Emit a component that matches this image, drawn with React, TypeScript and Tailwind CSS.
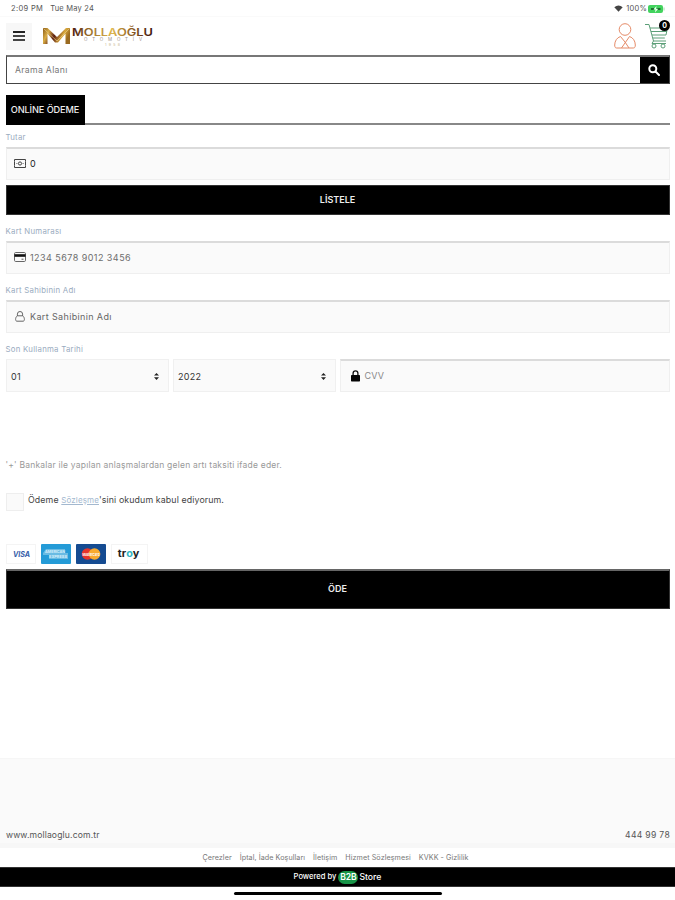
import React from "react";

function MoneyIcon() {
  return (
    <svg className="h-[9px] w-[12px] shrink-0" viewBox="0 0 12 9" fill="none" stroke="#444" strokeWidth="1">
      <path d="M.5 2.500V.5h11v2M.5 6.500v2h11v-2M.5 2.500v4M11.500 2.500v4" />
      <circle cx="6" cy="4.500" r="1.600" />
      <path d="M2.500 4.500h.8M8.700 4.500h.8" />
    </svg>
  );
}

function CardIcon() {
  return (
    <svg className="h-[10px] w-[12px] shrink-0" viewBox="0 0 12 10" fill="none">
      <rect x=".5" y=".5" width="11" height="9" rx="1.200" stroke="#666" />
      <path d="M.5 2.200h11v2.600H.5z" fill="#111" />
      <path d="M7.500 7.200h2" stroke="#555" />
    </svg>
  );
}

function PersonIcon() {
  return (
    <svg className="h-[11px] w-[10px] shrink-0" viewBox="0 0 10 11" fill="none" stroke="#666" strokeWidth="1">
      <path d="M2.400 5V3.100a2.600 2.600 0 0 1 5.200 0V5" />
      <path d="M2.400 4.800h5.200C8.900 5.600 9.400 7 9.400 8.500c0 1-.5 1.700-1.400 1.700H2C1.100 10.200.6 9.500.6 8.500.6 7 1.100 5.600 2.400 4.800z" />
    </svg>
  );
}

function LockIcon() {
  return (
    <svg className="h-[12px] w-[9px] shrink-0" viewBox="0 0 9 12">
      <path d="M2.100 5.500V3.300a2.400 2.400 0 0 1 4.800 0v2.200" fill="none" stroke="#111" strokeWidth="1.300" />
      <rect x="0" y="5" width="9" height="6.500" rx=".7" fill="#050505" />
    </svg>
  );
}

function Logo() {
  return (
    <svg className="ml-[11px] h-[22px] w-[111px]" viewBox="0 0 111 22">
      <defs>
        <linearGradient id="mark" x1="0" x2="1" y1="0" y2="0.300">
          <stop offset="0" stopColor="#8a5a18" />
          <stop offset=".25" stopColor="#d9ad45" />
          <stop offset=".52" stopColor="#5a1d10" />
          <stop offset=".8" stopColor="#d9a83c" />
          <stop offset="1" stopColor="#9a6a20" />
        </linearGradient>
        <linearGradient id="word" x1="0" x2="1" y1="0" y2="0">
          <stop offset="0" stopColor="#4a1a12" />
          <stop offset=".22" stopColor="#9a702c" />
          <stop offset=".5" stopColor="#dfb750" />
          <stop offset=".7" stopColor="#9a6928" />
          <stop offset="1" stopColor="#3c120e" />
        </linearGradient>
      </defs>
      <path d="M0 3h4.500l9.500 9 9-9H27v16h-4.500V8.500l-7.500 9h-3L4.500 8.500V19H0z" fill="url(#mark)" />
      <path d="M.5 3.500 14 16 26.500 3.500" fill="none" stroke="#f2d995" strokeWidth=".6" />
      <text x="29" y="10.500" textLength="81" lengthAdjust="spacingAndGlyphs" fontFamily="Inter, sans-serif" fontSize="10" fontWeight="600" fill="url(#word)">MOLLAOĞLU</text>
      <text x="41" y="16" textLength="58" fontFamily="Inter, sans-serif" fontSize="4.500" fill="#9b9187">OTOMOTİV</text>
      <text x="62" y="20.500" textLength="15" fontFamily="Inter, sans-serif" fontSize="3.500" fill="#c5b289">1958</text>
    </svg>
  );
}

function UserIcon() {
  return (
    <svg className="h-[26px] w-[22px]" viewBox="0 0 22 26" fill="none" stroke="#e58a67" strokeWidth="1">
      <circle cx="11" cy="6.500" r="5.800" />
      <path d="M6.500 13.500C3 14.500.7 18 .7 22c0 2 .5 3 2 3h16.600c1.500 0 2-1 2-3 0-4-2.300-7.500-5.800-8.500L7.500 25M6.500 13.500 11 19l4 6" />
    </svg>
  );
}

function CartIcon() {
  return (
    <svg className="h-[26px] w-[23px]" viewBox="0 0 23 26" fill="none" stroke="#5c9f78" strokeWidth="1">
      <path d="M0 1.500h4l4.500 16.500H21M5 5h16M6 8.500h16M7 12h14l1-5M7.800 15h12M8.500 18 7 20.500h14" />
      <circle cx="9" cy="23" r="2" />
      <circle cx="18" cy="23" r="2" />
    </svg>
  );
}

function StatusBar() {
  return (
    <div className="flex h-[17px] items-center border-b border-[#fafafa] pt-[1px] pr-[10px] pl-[11px] text-[7.500px] text-[#555]">
      <span className="tracking-[0.35px]">2:09 PM</span>
      <span className="ml-[7px] tracking-[0.2px]">Tue May 24</span>
      <svg className="ml-auto h-[7px] w-[9px]" viewBox="0 0 9 7">
        <path d="M.3 2.200Q4.500-1.200 8.700 2.200L4.500 6.800z" fill="#444" />
      </svg>
      <span className="ml-[3px] tracking-[0.2px]">100%</span>
      <svg className="ml-[1px] h-[8px] w-[17px]" viewBox="0 0 17 8">
        <rect width="15" height="8" rx="2" fill="#42d35e" />
        <path d="M16 2.500v3" stroke="#9bdfa8" />
        <path d="M3 4h3M9.500 4h3" stroke="#174d24" strokeWidth="1.500" />
        <path d="m8.500 1-3 3.500h2l-.5 3L10 4H8z" fill="#effff2" />
      </svg>
    </div>
  );
}

function Label({ children }: { children: React.ReactNode }) {
  return <div className="flex h-[20px] items-center pt-[1px] text-[7.800px] tracking-[0.27px] whitespace-nowrap text-[#9aabc0]">{children}</div>;
}

function Field({ label, icon, text, textStyle }: { label: string; icon: React.ReactNode; text: string; textStyle: string }) {
  return (
    <div>
      <Label>{label}</Label>
      <div className="flex h-[33px] items-center border border-t-2 border-[#efefef] border-t-[#dbdbdb] bg-[#fafafa] pb-[2px] pl-[7px]">
        <span className="flex w-[12px] justify-center">{icon}</span>
        <span className={`ml-[4.500px] whitespace-nowrap ${textStyle}`}>{text}</span>
      </div>
    </div>
  );
}

function Select({ value }: { value: string }) {
  return (
    <div className="flex h-[33px] w-[163px] items-center justify-between border border-[#f0f0f0] bg-[#fafafa] pt-[1px] pr-[9px] pl-[4.500px] text-[9px] text-[#333]">
      <span className="tracking-[0.3px]">{value}</span>
      <svg className="h-[7px] w-[5px]" viewBox="0 0 5 7" fill="#222">
        <path d="M2.500 0 5 2.600H0zM0 4.300h5L2.500 7z" />
      </svg>
    </div>
  );
}

export default function App() {
  return (
    <div className="flex h-[900px] w-[675px] flex-col overflow-hidden bg-white font-['Inter',sans-serif] leading-none">
      <StatusBar />
      <header className="flex h-[38px] items-center px-[6px]">
        <button className="flex h-[27px] w-[26px] items-center justify-center bg-[#f7f7f7]">
          <span className="flex w-[12px] flex-col gap-[2px]">
            <span className="h-[2px] bg-[#222]" />
            <span className="h-[2px] bg-[#444]" />
            <span className="h-[2px] bg-[#444]" />
          </span>
        </button>
        <Logo />
        <div className="ml-auto flex items-center gap-[9px]">
          <UserIcon />
          <div className="relative mr-[1px]">
            <CartIcon />
            <span className="absolute -top-[3px] -right-[2px] flex size-[11px] items-center justify-center rounded-full bg-black text-[7px] font-bold text-white">0</span>
          </div>
        </div>
      </header>

      <main className="flex flex-col px-[5.500px]">
        <div className="flex h-[29px] items-stretch border border-[#444] border-t-2 border-t-[#777]">
          <div className="flex flex-1 items-center pl-[8.500px] text-[8.700px] tracking-[0.3px] text-[#777]">Arama Alanı</div>
          <button className="flex w-[29px] items-center justify-center bg-black">
            <svg className="size-[12px]" viewBox="0 0 12 12" fill="none" stroke="white" strokeWidth="2">
              <circle cx="4.800" cy="4.800" r="3.500" />
              <path d="m7.500 7.500 3.500 3.500" strokeLinecap="round" />
            </svg>
          </button>
        </div>

        <div className="mt-[11px] flex h-[30px] border-b-2 border-[#888]">
          <div className="-mb-[2px] flex w-[79px] items-center justify-center bg-black text-[9.200px] font-medium tracking-[-0.1px] whitespace-nowrap text-[#eee]">ONLİNE ÖDEME</div>
        </div>

        <div className="mt-[2px]">
          <Field label="Tutar" icon={<MoneyIcon />} text="0" textStyle="text-[9px] text-[#222]" />
        </div>
        <button className="mt-[5px] flex h-[30px] items-center justify-center border border-[#333] bg-black pb-[2px] text-[9px] font-semibold text-[#eee]">LİSTELE</button>
        <div className="mt-[6px]">
          <Field label="Kart Numarası" icon={<CardIcon />} text="1234 5678 9012 3456" textStyle="text-[9px] tracking-[0.45px] text-[#6d6d6d]" />
        </div>
        <div className="mt-[6px]">
          <Field label="Kart Sahibinin Adı" icon={<PersonIcon />} text="Kart Sahibinin Adı" textStyle="text-[9px] tracking-[0.36px] text-[#666]" />
        </div>
        <div className="mt-[6px]">
          <Label>Son Kullanma Tarihi</Label>
          <div className="flex gap-[4px]">
            <Select value="01" />
            <Select value="2022" />
            <div className="flex h-[33px] flex-1 items-center border border-t-2 border-[#efefef] border-t-[#dbdbdb] bg-[#fafafa] pb-[1px] pl-[10px] text-[9px] text-[#888]">
              <LockIcon />
              <span className="ml-[5px] tracking-[0.2px]">CVV</span>
            </div>
          </div>
        </div>

        <p className="mt-[67px] h-[12px] text-[8.500px] leading-[12px] tracking-[0.210px] whitespace-nowrap text-[#999]">'+' Bankalar ile yapılan anlaşmalardan gelen artı taksiti ifade eder.</p>
        <div className="mt-[22px] flex h-[18px] text-[8.800px] tracking-[0.12px] text-[#444]">
          <span className="size-[18px] border border-[#eee] bg-[#fafafa]" />
          <span className="ml-[4.500px] leading-[14px] whitespace-nowrap">
            Ödeme <span className="text-[8px] text-[#a3b8cf] underline">Sözleşme</span>'sini okudum kabul ediyorum.
          </span>
        </div>

        <div className="mt-[33px] flex h-[20px] gap-[5px]">
          <svg className="h-[20px] w-[30px] border border-[#f4f4f4]" viewBox="0 0 30 20">
            <text x="6" y="13" textLength="19" lengthAdjust="spacingAndGlyphs" fontFamily="Inter, sans-serif" fontSize="8" fontWeight="700" fontStyle="italic" fill="#355da8">VISA</text>
          </svg>
          <svg className="h-[20px] w-[30px]" viewBox="0 0 30 20">
            <rect width="30" height="20" rx="1" fill="#249bd7" />
            <path d="M2 9 5 5h19v4h3v6H8v-4H2z" fill="#69bbe3" />
            <g fontFamily="Inter, sans-serif" fontSize="4" fontWeight="700" fill="#d4eefa">
              <text x="4" y="9" textLength="20" lengthAdjust="spacingAndGlyphs">AMERICAN</text>
              <text x="8" y="14" textLength="18" lengthAdjust="spacingAndGlyphs">EXPRESS</text>
            </g>
          </svg>
          <svg className="h-[20px] w-[30px]" viewBox="0 0 30 20">
            <rect width="30" height="20" rx="1" fill="#154b91" />
            <circle cx="11.500" cy="10" r="5.800" fill="#e6342b" />
            <circle cx="18.500" cy="10" r="5.800" fill="#f8aa2e" />
            <text x="6.500" y="11.500" textLength="17" lengthAdjust="spacingAndGlyphs" fontFamily="Inter, sans-serif" fontSize="4" fontWeight="700" fill="white">MasterCard</text>
          </svg>
          <svg className="h-[20px] w-[37px] border border-[#f4f4f4]" viewBox="0 0 37 20">
            <text x="5.500" y="13" textLength="24" lengthAdjust="spacingAndGlyphs" fontFamily="Inter, sans-serif" fontSize="11" fontWeight="700" fill="#222">tr<tspan fill="#31b5c5">o</tspan>y</text>
          </svg>
        </div>
        <button className="mt-[5px] flex h-[40px] items-center justify-center border border-t-2 border-[#333] border-t-[#666] bg-black pb-[2px] text-[9px] font-semibold text-[#eee]">ÖDE</button>
      </main>

      <footer className="mt-[149px]">
        <div className="flex h-[90px] items-end justify-between border-t border-b-[5px] border-t-[#f6f6f6] border-b-[#f7f7f7] bg-[#fafafa] px-[6px] pb-[3px] text-[8.600px] text-[#555]">
          <span className="tracking-[0.140px]">www.mollaoglu.com.tr</span>
          <span className="-mr-[1px] tracking-[0.3px]">444 99 78</span>
        </div>
        <nav className="flex h-[19px] items-center justify-center gap-[8px] pr-[4px] text-[7.200px] tracking-[0.06px] whitespace-nowrap text-[#777]">
          <span>Çerezler</span>
          <span>İptal, İade Koşulları</span>
          <span>İletişim</span>
          <span>Hizmet Sözleşmesi</span>
          <span>KVKK - Gizlilik</span>
        </nav>
        <div className="flex h-[20px] items-center justify-center border-y border-[#333] bg-black text-[7.600px] font-medium text-white">
          <span>Powered by</span>
          <span className="ml-[2px] flex h-[13px] w-[20px] items-center justify-center rounded-full bg-[#179447] text-[8.500px] font-semibold">B2B</span>
          <span className="ml-[1px] text-[8.700px]">Store</span>
        </div>
        <div className="mx-auto mt-[5px] h-[3px] w-[208px] rounded-full bg-black" />
      </footer>
    </div>
  );
}
